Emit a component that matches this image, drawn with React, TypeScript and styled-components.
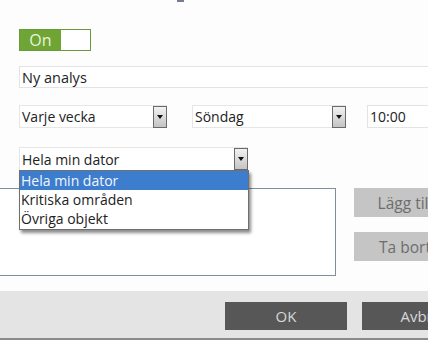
import React from 'react';
import styled, { createGlobalStyle } from 'styled-components';

const GlobalStyle = createGlobalStyle`
  html, body {
    margin: 0;
    padding: 0;
    width: 428px;
    height: 340px;
    overflow: hidden;
    background: #fdfdfd;
    font-family: 'Open Sans', 'Noto Sans', sans-serif;
  }
`;

const Page = styled.div`
  width: 428px;
  height: 340px;
  display: flex;
  flex-direction: column;
  overflow: hidden;
`;

const Content = styled.div`
  display: flex;
  flex-direction: column;
  align-items: flex-start;
  padding-left: 19px;
`;

const TopMark = styled.div`
  width: 7px;
  height: 2px;
  margin-left: 158px;
  margin-bottom: 1px;
  background: #737c90;
`;

const Toggle = styled.div`
  margin-top: 26px;
  width: 72px;
  height: 22px;
  box-sizing: border-box;
  border: 1px solid #6b9a3c;
  display: flex;
  background: #fff;
`;

const ToggleOn = styled.div`
  width: 41px;
  background: #6ea534;
  color: #e9f4da;
  font-size: 16px;
  line-height: 20px;
  text-align: center;
`;

const TextField = styled.div<{ $width: number }>`
  width: ${p => p.$width}px;
  flex-shrink: 0;
  box-sizing: border-box;
  border: 1px solid #e3e3e3;
  background: #fff;
  color: #222;
  font-size: 14px;
  padding-left: 2px;
  display: flex;
  align-items: center;
`;

const NameField = styled(TextField)`
  margin-top: 15px;
  height: 22px;
  font-size: 14.5px;
`;

const ScheduleRow = styled.div`
  margin-top: 17px;
  display: flex;
  align-items: center;
`;

const SelectBox = styled.div<{ $width: number; $gap?: number }>`
  position: relative;
  width: ${p => p.$width}px;
  margin-left: ${p => p.$gap ?? 0}px;
  flex-shrink: 0;
  height: 23px;
  box-sizing: border-box;
  border: 1px solid #e6e6e6;
  background: #fff;
  color: #222;
  font-size: 14px;
  padding-left: 2px;
  display: flex;
  align-items: center;
  justify-content: space-between;
`;

const ArrowButton = styled.div`
  width: 14px;
  height: 22px;
  box-sizing: border-box;
  border: 1px solid #6a6a6a;
  background: linear-gradient(#f2f2f2, #c4c4c4);
  display: flex;
  justify-content: center;
  align-items: center;
  margin-right: -1px;
  &::after {
    content: '';
    border-left: 3.5px solid transparent;
    border-right: 3.5px solid transparent;
    border-top: 4px solid #111;
  }
`;

const TimeField = styled(TextField)`
  margin-left: 21px;
  height: 23px;
`;

const ScopeSelect = styled(SelectBox)`
  margin-top: 19px;
  height: 24px;
  z-index: 2;
`;

const OptionList = styled.div`
  position: absolute;
  top: 100%;
  left: -1px;
  width: 230px;
  box-sizing: border-box;
  border: 1px solid #6f6f6f;
  background: #fff;
  box-shadow: 2px 3px 3px rgba(0, 0, 0, 0.45);
  padding-bottom: 1px;
`;

const Option = styled.div<{ $active?: boolean }>`
  height: 19px;
  line-height: 19px;
  padding-left: 1px;
  font-size: 14px;
  color: ${p => (p.$active ? '#f2f6fc' : '#222')};
  background: ${p => (p.$active ? '#3d7dce' : 'transparent')};
`;

const ItemsRow = styled.div`
  margin-top: 17px;
  display: flex;
  align-items: flex-start;
`;

const ItemsBox = styled.div`
  margin-left: -30px;
  width: 347px;
  height: 88px;
  box-sizing: border-box;
  border: 1px solid #7d8ea0;
  background: #fff;
`;

const SideButtons = styled.div`
  margin-left: 18px;
  display: flex;
  flex-direction: column;
  gap: 15px;
`;

const SideButton = styled.div`
  width: 102px;
  height: 29px;
  background: #c5c5c5;
  color: #6d6d6d;
  font-size: 15.5px;
  display: flex;
  align-items: center;
  justify-content: center;
`;

const Footer = styled.div`
  margin-top: 15px;
  flex: 1;
  background: #e4e4e4;
  border-bottom: 2px solid #8a8a8a;
  display: flex;
  align-items: flex-start;
  padding: 11px 0 0 225px;
  gap: 15px;
`;

const FooterButton = styled.div`
  width: 122px;
  height: 28px;
  flex-shrink: 0;
  background: #575757;
  color: #d8d8d8;
  font-size: 15px;
  display: flex;
  align-items: center;
  justify-content: center;
`;

const scopes = ['Hela min dator', 'Kritiska områden', 'Övriga objekt'];

const App: React.FC = () => {
  return (
    <Page>
      <GlobalStyle />
      <Content>
        <TopMark />
        <Toggle>
          <ToggleOn>On</ToggleOn>
        </Toggle>
        <NameField $width={440}>Ny analys</NameField>
        <ScheduleRow>
          <SelectBox $width={148}>
            Varje vecka
            <ArrowButton />
          </SelectBox>
          <SelectBox $width={154} $gap={25}>
            Söndag
            <ArrowButton />
          </SelectBox>
          <TimeField $width={100}>10:00</TimeField>
        </ScheduleRow>
        <ScopeSelect $width={229}>
          Hela min dator
          <ArrowButton />
          <OptionList>
            {scopes.map((s, i) => (
              <Option key={s} $active={i === 0}>
                {s}
              </Option>
            ))}
          </OptionList>
        </ScopeSelect>
        <ItemsRow>
          <ItemsBox />
          <SideButtons>
            <SideButton>Lägg till</SideButton>
            <SideButton>Ta bort</SideButton>
          </SideButtons>
        </ItemsRow>
      </Content>
      <Footer>
        <FooterButton>OK</FooterButton>
        <FooterButton>Avbryt</FooterButton>
      </Footer>
    </Page>
  );
};

export default App;
